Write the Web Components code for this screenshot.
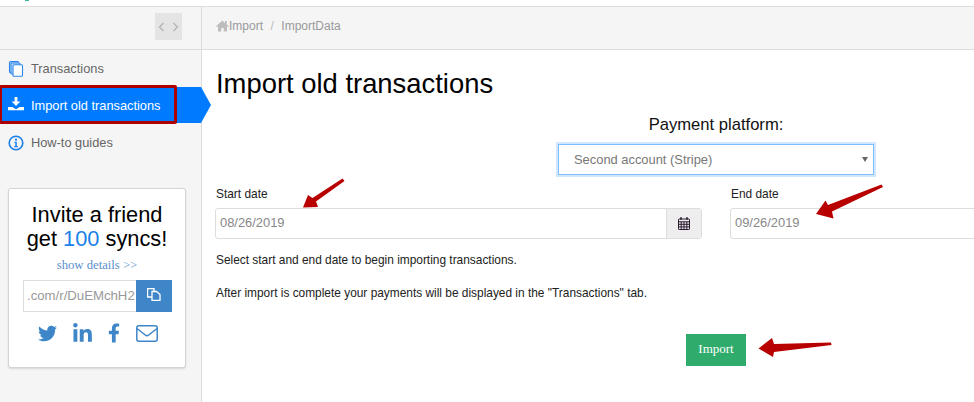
<!DOCTYPE html>
<html>
<head>
<meta charset="utf-8">
<title>Import old transactions</title>
<style>
    html, body { margin: 0; height: 100%; overflow: hidden; background: #fff; }
    body { font-family: "Liberation Sans", Arial, sans-serif; }
</style>
</head>
<body>
<app-shell>
    <collapse-button slot="corner"></collapse-button>
    <crumb-bar slot="crumbs">
        <span>Import</span><span>ImportData</span>
    </crumb-bar>
    <side-nav slot="side">
        <nav-item>
            <svg slot="icon" width="16" height="16" viewBox="0 0 16 16" stroke="#2a86ea" stroke-width="1.100"><rect x="1.500" y="0.600" width="9" height="11" rx="1" fill="#cfe3fa"/><rect x="3" y="2" width="9" height="11" rx="1" fill="#cfe3fa"/><rect x="5" y="3.800" width="9.500" height="11.400" rx="1" fill="#fff"/></svg>
            Transactions
        </nav-item>
        <nav-item active>
            <svg slot="icon" width="16" height="16" viewBox="0 0 16 16" fill="#fff"><path d="M6.600 0h2.800v4.600h2.900L8 9 3.700 4.600h2.900z"/><path d="M0 9.800h4.400L8 12l3.600-2.200H16V13H0z" transform="translate(0 .2)"/></svg>
            Import old transactions
        </nav-item>
        <nav-item>
            <svg slot="icon" width="16" height="16" viewBox="0 0 16 16"><circle cx="8" cy="8" r="6.800" fill="none" stroke="#1a7fe8" stroke-width="1.600"/><rect x="7" y="3.600" width="2" height="2" fill="#1a7fe8"/><path d="M6.400 6.800h2.400v4.200h1v1.200H6.300V11h1V8H6.400z" fill="#1a7fe8"/></svg>
            How-to guides
        </nav-item>
        <invite-card></invite-card>
    </side-nav>
    <import-page></import-page>
</app-shell>

<template id="app-shell-tpl">
    <style>
        :host { display: block; position: relative; width: 974px; height: 402px; overflow: hidden; background: #fff; }
        .strip { height: 6px; border-bottom: 1px solid #ddd; padding-left: 25px; }
        .strip i { display: block; width: 4px; height: 1px; background: #3fb8a0; }
        .head { display: flex; height: 42px; background: #f5f5f5; border-bottom: 1px solid #ddd; }
        .corner { width: 182px; border-right: 1px solid #ddd; display: flex; justify-content: flex-end; align-items: flex-start; padding: 6px 19px 0 0; }
        .crumbs { flex: 1; }
        .body { display: flex; height: 352px; }
        .side { width: 201px; flex: none; background: #f5f5f5; border-right: 1px solid #ddd; }
        .main { flex: 1; min-width: 0; }
    </style>
    <div class="strip"><i></i></div>
    <div class="head">
        <div class="corner"><slot name="corner"></slot></div>
        <div class="crumbs"><slot name="crumbs"></slot></div>
    </div>
    <div class="body">
        <div class="side"><slot name="side"></slot></div>
        <div class="main"><slot></slot></div>
    </div>
</template>

<template id="collapse-button-tpl">
    <style>
        :host { display: flex; width: 27px; height: 27px; background: #e4e4e4; align-items: center; justify-content: center; gap: 7px; }
    </style>
    <svg width="7" height="10" viewBox="0 0 7 10" fill="none" stroke="#b4b4b4" stroke-width="1.300"><path d="M5.500 1L1.500 5l4 4"/></svg>
    <svg width="7" height="10" viewBox="0 0 7 10" fill="none" stroke="#b4b4b4" stroke-width="1.300"><path d="M1.500 1l4 4-4 4"/></svg>
</template>

<template id="crumb-bar-tpl">
    <style>
        :host { display: flex; align-items: center; height: 38px; padding-left: 14px; font-size: 12px; color: #999; white-space: nowrap; }
        .sep { margin: 0 7.500px; color: #bbb; }
    </style>
    <svg width="13" height="12" viewBox="0 0 13 12" fill="#bdbdbd"><path d="M6.500 0.500L0 6.300l.7.700L2 5.900V11.500h3.300V8h2.400v3.500H11V5.900l1.300 1.100.7-.7-2.300-2.100V1H9v1.900z"/></svg>
    <span id="out"></span>
</template>

<template id="side-nav-tpl">
    <style>
        :host { display: block; }
    </style>
    <slot></slot>
</template>

<template id="nav-item-tpl">
    <style>
        :host { display: flex; position: relative; align-items: center; height: 37px; box-sizing: border-box; padding-left: 8px; font-size: 12.800px; color: #666; }
        :host([active]) { height: 36px; margin-bottom: 1px; color: #fff; background: #007bff; }
        .ic { display: flex; width: 16px; margin-right: 7px; }
        .tip, .mark { display: none; position: absolute; }
        :host([active]) .tip { display: block; left: 100%; top: 0; width: 0; height: 0; border-style: solid; border-width: 18px 0 18px 10px; border-color: transparent transparent transparent #007bff; }
        :host([active]) .mark { display: block; left: -1px; top: -2px; width: 178px; height: 39px; box-sizing: border-box; border: 3px solid #ad0000; border-radius: 2px; }
    </style>
    <span class="ic"><slot name="icon"></slot></span>
    <slot></slot>
    <span class="tip"></span>
    <span class="mark"></span>
</template>

<template id="invite-card-tpl">
    <style>
        :host { display: block; box-sizing: border-box; width: 178px; height: 180px; margin: 27px 0 0 8px; padding-top: 14px; background: #fff; border: 1px solid #d4d4d4; border-radius: 3px; box-shadow: 0 1px 2px rgba(0,0,0,.12); text-align: center; }
        h3 { margin: 0; font-size: 21.800px; font-weight: 400; line-height: 24px; color: #000; white-space: nowrap; }
        h3 b { font-weight: 400; color: #1a7fe8; }
        a { display: block; margin-top: 6px; font: 12.700px/16px "Liberation Serif", serif; color: #5a90cc; }
        .ref { display: flex; height: 32px; margin: 7px 13px 0 14px; }
        .ref span { flex: 1; box-sizing: border-box; border: 1px solid #ddd; border-right: 0; font-size: 13.200px; line-height: 30px; color: #999; text-align: left; padding-left: 3px; white-space: nowrap; }
        .ref button { width: 36px; flex: none; padding: 0 0 3px; border: 0; background: #3e86c8; display: flex; align-items: center; justify-content: center; }
        .social { display: flex; align-items: center; margin: 10px 0 0 29px; height: 22px; }
        .social svg { flex: none; }
    </style>
    <h3>Invite a friend<br>get <b>100</b> syncs!</h3>
    <a>show details &gt;&gt;</a>
    <div class="ref">
        <span>.com/r/DuEMchH2</span>
        <button type="button">
            <svg width="14" height="13" viewBox="0 0 14 13"><path d="M.5.500h6.500v8.500H.5z" fill="#3e86c8" stroke="#fff" stroke-width="1.400"/><path d="M5 3.500h4.500l3.500 3v6H5z" fill="#3e86c8" stroke="#fff" stroke-width="1.300"/></svg>
        </button>
    </div>
    <div class="social">
        <svg width="19" height="19" viewBox="0 0 512 512" fill="#3e86c8"><path d="M459.370 151.716c.325 4.548.325 9.097.325 13.645 0 138.720-105.583 298.558-298.558 298.558-59.452 0-114.680-17.219-161.137-47.106 8.447.974 16.568 1.299 25.340 1.299 49.055 0 94.213-16.568 130.274-44.832-46.132-.975-84.792-31.188-98.112-72.772 6.498.974 12.995 1.624 19.818 1.624 9.421 0 18.843-1.300 27.614-3.573-48.081-9.747-84.143-51.980-84.143-102.985v-1.299c13.969 7.797 30.214 12.670 47.431 13.319-28.264-18.843-46.781-51.005-46.781-87.391 0-19.492 5.197-37.360 14.294-52.954 51.655 63.675 129.300 105.258 216.365 109.807-1.624-7.797-2.599-15.918-2.599-24.040 0-57.828 46.782-104.934 104.934-104.934 30.213 0 57.502 12.670 76.670 33.137 23.715-4.548 46.456-13.320 66.599-25.340-7.798 24.366-24.366 44.833-46.132 57.827 21.117-2.273 41.584-8.122 60.426-16.243-14.292 20.791-32.161 39.308-52.628 54.253z"/></svg>
        <svg style="margin-left:16px" width="19" height="20" viewBox="0 0 448 480" fill="#3e86c8"><path d="M100.280 448H7.400V148.900h92.880zM53.790 108.100C24.090 108.100 0 83.500 0 53.800a53.790 53.790 0 0 1 107.580 0c0 29.700-24.100 54.300-53.790 54.300zM447.900 448h-92.680V302.400c0-34.700-.7-79.200-48.290-79.200-48.290 0-55.690 37.700-55.690 76.700V448h-92.780V148.900h89.080v40.800h1.300c12.400-23.500 42.690-48.300 87.880-48.300 94 0 111.280 61.900 111.280 142.300V448z"/></svg>
        <svg style="margin-left:16px" width="12" height="20" viewBox="0 0 320 512" fill="#3e86c8"><path d="M279.140 288l14.220-92.660h-88.910v-60.130c0-25.350 12.420-50.060 52.240-50.060h40.420V6.260S260.430 0 225.360 0c-73.220 0-121.080 44.380-121.080 124.720v70.620H22.890V288h81.390v224h100.170V288z"/></svg>
        <svg style="margin-left:16px" width="22" height="17" viewBox="0 0 22 17" fill="none" stroke="#3e86c8" stroke-width="1.500"><rect x=".8" y=".8" width="20.400" height="15.400" rx="2"/><path d="M1 3.500l8.300 6.500c1 .8 2.400.8 3.400 0L21 3.500"/></svg>
    </div>
</template>

<template id="date-field-tpl">
    <style>
        :host { display: block; font-size: 11.900px; color: #222; }
        label { display: block; line-height: 14px; margin-bottom: 7px; padding-left: 1px; }
        .box { display: flex; height: 31px; box-sizing: border-box; border: 1px solid #ddd; border-radius: 3px; overflow: hidden; }
        .val { flex: 1; padding-left: 4px; font-size: 12.900px; line-height: 28px; color: #888; }
        .add { width: 34px; display: flex; align-items: center; justify-content: center; background: #eee; border-left: 1px solid #ddd; }
    </style>
    <label id="lbl"></label>
    <div class="box">
        <span class="val" id="val"></span>
        <span class="add">
            <svg width="12" height="13" viewBox="0 0 12 13" fill="none" stroke="#2a1a30" stroke-width="1"><rect x=".5" y="2" width="11" height="10.500" rx=".6"/><path d="M.5 4.800h11M.5 7.300h11M.5 9.900h11M3.200 4.800v7.700M6 4.800v7.700M8.800 4.800v7.700"/><path d="M3 .3v2.500M9 .3v2.500" stroke-width="1.600"/></svg>
        </span>
    </div>
</template>

<template id="import-page-tpl">
    <style>
        :host { display: block; position: relative; width: 1000px; height: 352px; padding-left: 14px; }
        h1 { margin: 0; padding-top: 19px; font-size: 27.400px; font-weight: 400; line-height: 30px; color: #000; }
        .platform { margin-top: 16px; text-align: center; font-size: 16.600px; line-height: 20px; color: #111; }
        .select { display: flex; align-items: center; justify-content: space-between; box-sizing: border-box; width: 316px; height: 31px; margin: 9px auto 0; padding: 0 5px 0 15px; border: 1px solid #80bdff; box-shadow: 0 0 0 2px rgba(0,123,255,.18); font-size: 12.900px; color: #777; }
        .select i { width: 0; height: 0; border: 3px solid transparent; border-top: 5px solid #666; border-bottom: 0; }
        .dates { display: grid; grid-template-columns: 487px 487px; gap: 28px; margin: 12px 0 0 -1px; }
        p { margin: 0; font-size: 11.900px; line-height: 16px; color: #222; }
        .first { margin-top: 13px; }
        .second { margin-top: 17px; }
        .go { display: block; width: 60px; height: 32px; margin: 33px auto 0 470px; padding: 0 0 2px; border: 0; background: #2fac6c; color: #fff; font: 13px "Liberation Serif", serif; }
        svg.ann { position: absolute; left: -202px; top: -50px; width: 974px; height: 402px; pointer-events: none; }
    </style>
    <h1>Import old transactions</h1>
    <div class="platform">Payment platform:</div>
    <div class="select">Second account (Stripe)<i></i></div>
    <div class="dates">
        <date-field label="Start date" value="08/26/2019" addon></date-field>
        <date-field label="End date" value="09/26/2019"></date-field>
    </div>
    <p class="first">Select start and end date to begin importing transactions.</p>
    <p class="second">After import is complete your payments will be displayed in the "Transactions" tab.</p>
    <button class="go" type="button">Import</button>
    <svg class="ann" viewBox="0 0 974 402" fill="#b80000">
        <path d="M342.500 178.500L344.500 181 316 201.500 318 207 303 207.500 308 195 312.500 198z"/>
        <path d="M881.500 184.500L883 187 832 211.500 833.500 218.500 816 214 825.500 200.500 828 205z"/>
        <path d="M831 342.500L831.500 345 774 352 773 357 758.500 348.500 772 338 774 344z"/>
    </svg>
</template>

<script>
    // shared base: clones template into an open shadow root
    class TplElement extends HTMLElement {
        constructor() {
            super();
            const tpl = document.getElementById(this.localName + "-tpl");
            this.attachShadow({mode: "open"}).appendChild(tpl.content.cloneNode(true));
        }
    }

    class CrumbBar extends TplElement {
        connectedCallback() {
            // breadcrumb parts are passed as children, separators go between them
            const parts = Array.from(this.children).map(n => n.textContent);
            this.shadowRoot.getElementById("out").innerHTML = parts.join('<span class="sep">/</span>');
        }
    }

    class DateField extends TplElement {
        connectedCallback() {
            this.shadowRoot.getElementById("lbl").textContent = this.getAttribute("label");
            this.shadowRoot.getElementById("val").textContent = this.getAttribute("value");
            if (!this.hasAttribute("addon")) {
                this.shadowRoot.querySelector(".add").remove();
            }
        }
    }

    ["app-shell", "collapse-button", "side-nav", "nav-item", "invite-card", "import-page"].forEach(name => {
        customElements.define(name, class extends TplElement {});
    });
    customElements.define("crumb-bar", CrumbBar);
    customElements.define("date-field", DateField);
</script>
</body>
</html>
